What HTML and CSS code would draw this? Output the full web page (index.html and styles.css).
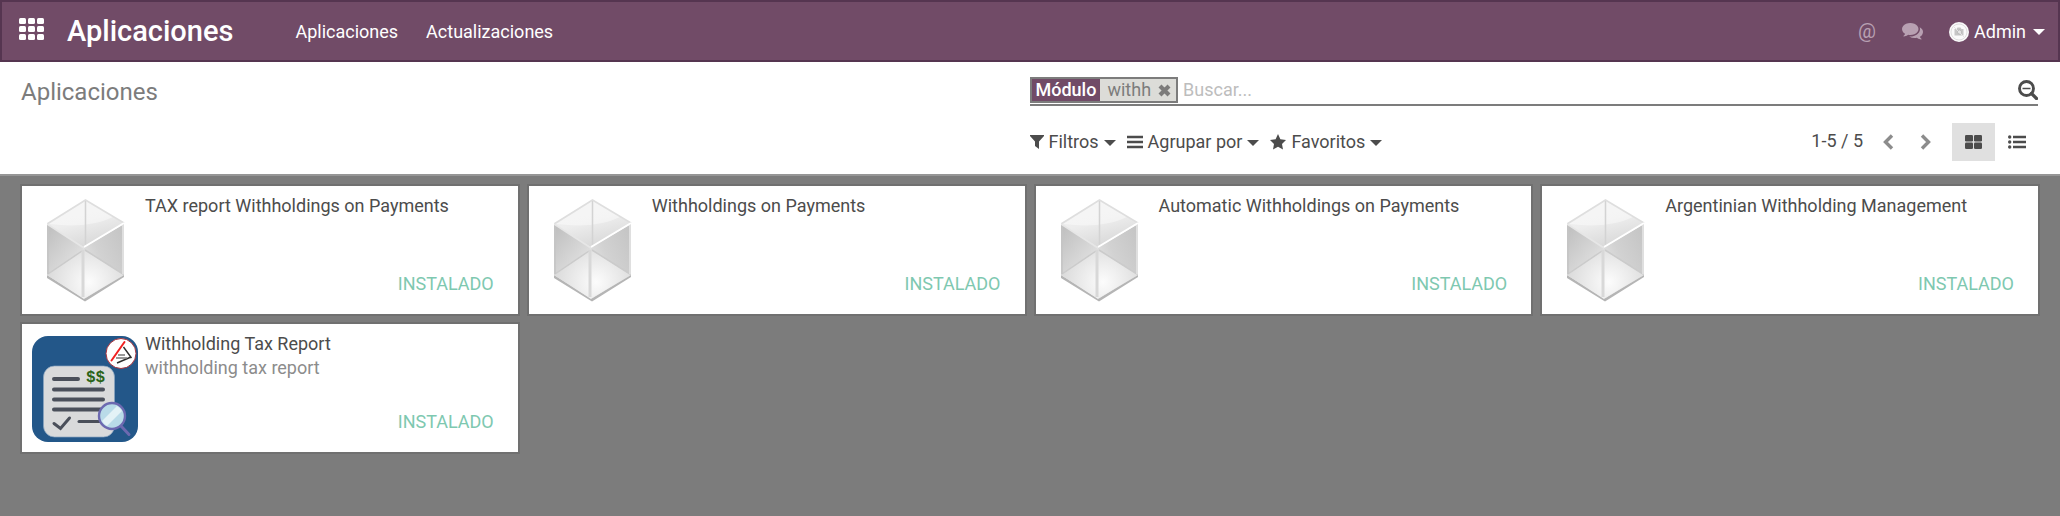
FILE: index.html
```html
<!DOCTYPE html>
<html lang="es">
<head>
<meta charset="utf-8">
<title>Aplicaciones</title>
<link rel="stylesheet" href="styles.css">
</head>
<body>
<svg class="defs" aria-hidden="true">
  <defs>
    <linearGradient id="g-top" x1="0" y1="0" x2="0.4" y2="1"><stop offset="0" stop-color="#f1f1f1"/><stop offset="0.55" stop-color="#ededed"/><stop offset="1" stop-color="#dadada"/></linearGradient>
    <linearGradient id="g-left" x1="0" y1="0" x2="0.6" y2="1"><stop offset="0" stop-color="#bdbdbd"/><stop offset="0.6" stop-color="#d9d9d9"/><stop offset="1" stop-color="#efefef"/></linearGradient>
    <linearGradient id="g-right" x1="1" y1="0" x2="0.1" y2="0.8"><stop offset="0" stop-color="#c3c3c3"/><stop offset="0.6" stop-color="#d2d2d2"/><stop offset="1" stop-color="#e6e6e6"/></linearGradient>
    <radialGradient id="g-base" gradientUnits="userSpaceOnUse" cx="42" cy="83" r="40"><stop offset="0" stop-color="#fcfcfc"/><stop offset="1" stop-color="#dcdcdc"/></radialGradient>
    <symbol id="cube" viewBox="0 0 78 103">
      <path d="M0 76 38 99 77 75V78L38 102.500 0 79Z" fill="#b5b5b5"/>
      <path d="M0 25 37 48.500V100L0 76Z" fill="url(#g-left)"/>
      <path d="M77 25 37 48.500V100L77 76Z" fill="url(#g-right)"/>
      <path d="M0 76 37 51 77 76 37 99.500Z" fill="url(#g-base)"/>
      <path d="M0 25 38.500 1 77 24 37 48.500Z" fill="url(#g-top)"/>
      <path d="M2 25 38.500 2 66 18Q42 30 2 25Z" fill="#fff" opacity=".4"/>
      <path d="M38.500 2V46" stroke="#d3d3d3" stroke-width="1.500"/>
      <path d="M0 25 38.500 1 77 24" fill="none" stroke="#dedede" stroke-width="1.500"/>
      <path d="M1 75 35 52M38 51 76 75" fill="none" stroke="#cbcbcb" stroke-width="1.500"/>
      <path d="M36 51V98" stroke="#d8d8d8" stroke-width="3"/>
      <path d="M1 26V75" stroke="#c4c4c4" stroke-width="1.500"/>
      <path d="M76 25V75" stroke="#dfdfdf" stroke-width="2"/>
      <path d="M0 25 37 49" stroke="#e6e6e6" stroke-width="1.500"/>
      <path d="M37 48 77 24" stroke="#fff" stroke-width="2"/>
    </symbol>
  </defs>
</svg>

<header class="navbar">
  <button class="nav-btn apps" aria-label="Menú de aplicaciones">
    <svg width="25" height="22" viewBox="0 0 25 22" fill="#fff"><rect width="7" height="6" rx="1.500"/><rect x="9" width="7" height="6" rx="1.500"/><rect x="18" width="7" height="6" rx="1.500"/><rect y="8" width="7" height="6" rx="1.500"/><rect x="9" y="8" width="7" height="6" rx="1.500"/><rect x="18" y="8" width="7" height="6" rx="1.500"/><rect y="16" width="7" height="6" rx="1.500"/><rect x="9" y="16" width="7" height="6" rx="1.500"/><rect x="18" y="16" width="7" height="6" rx="1.500"/></svg>
  </button>
  <a class="brand" href="#">Aplicaciones</a>
  <nav class="menu">
    <a href="#">Aplicaciones</a>
    <a href="#">Actualizaciones</a>
  </nav>
  <div class="systray">
    <button class="nav-btn at" aria-label="Actividades">@</button>
    <button class="nav-btn chat" aria-label="Conversaciones">
      <svg width="21" height="17" viewBox="0 0 1792 1450" fill="#b8a0b2"><path d="M1408 512q0 139-94 257t-256.500 186.500T704 1024q-86 0-176-16-124 88-278 128-36 9-86 16h-3q-11 0-20.500-8t-11.500-21q-1-3-1-6.500t.5-6.500 2-6l2.500-5 3.500-5.500 4-5 4.500-5 4-4.500q5-6 23-25t26-29.500 22.500-29 25-38.500 20.500-44q-124-72-195-177T0 512q0-139 94-257T350.500 68.500 704 0t353.500 68.500T1314 255t94 257zm384 256q0 120-71 224.500T1526 1169q10 24 20.500 44t25 38.500 22.500 29 26 29.500 23 25q1 1 4 4.500t4.500 5 4 5 3.500 5.500l2.500 5 2 6 .5 6.500-1 6.500q-3 14-13 22t-22 7q-50-7-86-16-154-40-278-128-90 16-176 16-271 0-472-132 58 4 88 4 161 0 309-45t264-129q125-92 192-212t67-254q0-77-23-152 129 71 204 178t75 230z"/></svg>
    </button>
    <button class="nav-btn user">
      <svg width="20" height="20" viewBox="0 0 20 20"><circle cx="10" cy="10" r="10" fill="#fafafa"/><circle cx="10" cy="10" r="8" fill="none" stroke="#dedede"/><path d="M5.500 7h2l1-1.500h3L12.500 7h2v6.500h-9Z" fill="#c6c6c6"/><circle cx="10.500" cy="10" r="2" fill="#e6e6e6" stroke="#aaa" stroke-width=".6"/><path d="M4.500 4.500 15.500 15.500" stroke="#e4e4e4"/></svg>
      <span>Admin</span>
      <span class="caret"></span>
    </button>
  </div>
</header>

<section class="panel">
  <h1 class="crumb">Aplicaciones</h1>
  <div class="tools">
    <div class="search">
      <div class="facet">
        <span class="facet-name">Módulo</span>
        <span class="facet-value">withh</span>
        <button class="facet-x" aria-label="Quitar"><svg width="13" height="13" viewBox="0 0 13 13"><path d="M2 2 11 11M11 2 2 11" stroke="#7c7b7a" stroke-width="4.200"/></svg></button>
      </div>
      <input class="search-input" type="text" placeholder="Buscar..." aria-label="Buscar">
      <button class="search-btn" aria-label="Buscar">
        <svg width="20" height="20" viewBox="0 0 20 20" fill="none" stroke="#4c4c4c"><circle cx="8.500" cy="8.500" r="7" stroke-width="2.900"/><path d="M4.500 8.500h8" stroke-width="1.500"/><path d="M13.500 13.500 18.500 18.500" stroke-width="3.200" stroke-linecap="round"/></svg>
      </button>
    </div>
    <div class="row">
      <div class="filters">
        <button class="filter"><svg width="14" height="14" viewBox="0 0 14 14"><path d="M0 0H14V1L9 6.500V14L5 11V6.500L0 1Z"/></svg><span>Filtros</span><span class="caret"></span></button>
        <button class="filter"><svg width="16" height="14" viewBox="0 0 16 14"><path d="M0 .8H16V3.200H0ZM0 5.800H16V8.200H0ZM0 10.800H16V13.200H0Z"/></svg><span>Agrupar por</span><span class="caret"></span></button>
        <button class="filter"><svg width="16" height="16" viewBox="0 0 16 16"><path d="M8 0 10.400 5.200 16 6 12 9.900 13 15.500 8 12.800 3 15.500 4 9.900 0 6 5.600 5.200Z"/></svg><span>Favoritos</span><span class="caret"></span></button>
      </div>
      <div class="pager">
        <span class="count">1-5 / 5</span>
        <button class="arrow" aria-label="Anterior"><svg width="11" height="16" viewBox="0 0 11 16"><path d="M9 1.500 2.500 8 9 14.500"/></svg></button>
        <button class="arrow" aria-label="Siguiente"><svg width="11" height="16" viewBox="0 0 11 16"><path d="M2 1.500 8.500 8 2 14.500"/></svg></button>
        <button class="view active" aria-label="Kanban"><svg width="17" height="14" viewBox="0 0 17 14"><rect width="8" height="6.500" rx="1.300"/><rect x="9" width="8" height="6.500" rx="1.300"/><rect y="7.500" width="8" height="6.500" rx="1.300"/><rect x="9" y="7.500" width="8" height="6.500" rx="1.300"/></svg></button>
        <button class="view" aria-label="Lista"><svg width="18" height="14" viewBox="0 0 18 14"><circle cx="1.700" cy="2" r="1.700"/><circle cx="1.700" cy="7" r="1.700"/><circle cx="1.700" cy="12" r="1.700"/><path d="M5 .8H18V3.200H5ZM5 5.800H18V8.200H5ZM5 10.800H18V13.200H5Z"/></svg></button>
      </div>
    </div>
  </div>
</section>

<main class="kanban">
  <article class="card">
    <div class="icon"><svg class="cube"><use href="#cube"/></svg></div>
    <div class="body"><h2>TAX report Withholdings on Payments</h2><p class="state">INSTALADO</p></div>
  </article>
  <article class="card">
    <div class="icon"><svg class="cube"><use href="#cube"/></svg></div>
    <div class="body"><h2>Withholdings on Payments</h2><p class="state">INSTALADO</p></div>
  </article>
  <article class="card">
    <div class="icon"><svg class="cube"><use href="#cube"/></svg></div>
    <div class="body"><h2>Automatic Withholdings on Payments</h2><p class="state">INSTALADO</p></div>
  </article>
  <article class="card">
    <div class="icon"><svg class="cube"><use href="#cube"/></svg></div>
    <div class="body"><h2>Argentinian Withholding Management</h2><p class="state">INSTALADO</p></div>
  </article>
  <article class="card">
    <div class="icon">
      <svg width="106" height="106" viewBox="0 0 106 106">
        <rect width="106" height="106" rx="16" fill="#235789"/>
        <rect x="11.500" y="30" width="71" height="71" rx="11" fill="#d9dadb" stroke="#8aa5c0" stroke-width=".7"/>
        <g stroke="#4a4f5a" stroke-width="4" stroke-linecap="round" fill="none">
          <path d="M22 43H46M22 53.500H71M22 63.500H71M22 73.500H70"/>
          <path d="M47 85.500H68" stroke-width="3"/>
          <path d="M22 87.500 28.500 92.500 37.500 82" stroke-width="3"/>
        </g>
        <text x="54" y="46" class="dollar">$$</text>
        <path d="M89 90 97 98.500" stroke="#6c69b0" stroke-width="3" stroke-linecap="round"/>
        <circle cx="80" cy="80" r="13" fill="#b9dbe8" stroke="#6c69b0" stroke-width="2.400"/>
        <path d="M70 85 85 70A12 12 0 0 1 90 75L75 90A12 12 0 0 1 70 85Z" fill="#e3f2f6"/>
        <circle cx="89" cy="17.500" r="15" fill="#fff" stroke="#a8323c"/>
        <path d="M79.500 24.500 92.500 6" stroke="#f02020" stroke-width="2" stroke-linecap="round"/>
        <path d="M91.500 11 99.500 22M85 27 99 21" stroke="#2d2d2d" stroke-width="1.400" fill="none"/>
        <path d="M86 19H93M84 22H95" stroke="#777" stroke-width="1.400"/>
      </svg>
    </div>
    <div class="body"><h2>Withholding Tax Report</h2><p class="summary">withholding tax report</p><p class="state">INSTALADO</p></div>
  </article>
</main>
</body>
</html>
```
FILE: styles.css
```css
* { box-sizing: border-box; }
html { min-height: 100%; background: #7c7c7c; }
body { margin: 0; font-family: Roboto, "Liberation Sans", sans-serif; font-size: 18px; line-height: 24px; color: #4c4c4c; }
.defs { position: absolute; width: 0; height: 0; }
svg { display: block; flex: none; }
button { font: inherit; color: inherit; background: none; border: 0; padding: 0; display: flex; align-items: center; }
a { color: inherit; text-decoration: none; }
h1, h2, p { margin: 0; font-size: inherit; font-weight: 400; }

.navbar { display: flex; align-items: center; height: 62px; padding: 0 13px 0 17px; background: #714b67; border: 2px solid #553550; color: #fff; }
.apps { padding-bottom: 4px; }
.brand { margin-left: 23px; font-size: 29px; line-height: 36px; font-weight: 500; }
.menu { display: flex; gap: 28px; margin-left: 62px; }
.systray { display: flex; align-items: center; margin-left: auto; }
.at { color: #b8a0b2; font-size: 20px; }
.chat { margin-left: 26px; }
.user { gap: 5px; margin-left: 26px; }
.user, .menu { padding-top: 1px; }
.caret { width: 0; height: 0; border: 6px solid transparent; border-top-color: currentColor; border-bottom: 0; }
.user .caret { margin-left: 2px; }

.panel { display: flex; padding: 14px 22px 13px 21px; background: #fff; border-bottom: 2px solid #969696; }
.crumb { flex: 1; font-size: 24px; line-height: 32px; color: #7c7c7c; }
.tools { flex: 1; }
.search { display: flex; align-items: center; height: 30px; border-bottom: 2px solid #7c7c7c; }
.facet { display: flex; height: 26px; background: #dcdcd8; border: 2px solid #7c7c7c; color: #7c7c7c; line-height: 22px; }
.facet-name { padding: 0 4px; background: #714b67; color: #fff; font-weight: 500; }
.facet-value { padding: 0 7px; }
.facet-x { padding-right: 5px; }
.search-input { flex: 1; min-width: 0; padding: 0 5px; border: 0; outline: 0; background: none; font: inherit; color: #4c4c4c; }
.search-input::placeholder { color: #bdbdbd; opacity: 1; }
.row { display: flex; justify-content: space-between; align-items: center; margin-top: 17px; }
.filters { display: flex; gap: 11px; }
.filter { gap: 5px; }
.filter .caret { margin-top: 2px; }
.filter svg, .view svg { fill: #4c4c4c; }
.pager { display: flex; align-items: center; }
.count { padding-bottom: 2px; }
.arrow { margin-left: 20px; width: 17px; }
.arrow svg { fill: none; stroke: #8c8c8c; stroke-width: 3.4px; }
.view { justify-content: center; width: 43px; height: 38px; }
.view.active { margin-left: 15px; background: #e0e0e0; }

.kanban { display: grid; grid-template-columns: repeat(4, 1fr); gap: 10px 11px; padding: 10px 22px; }
.card { display: flex; gap: 7px; height: 128px; padding: 8px 24px 8px 10px; background: #fff; box-shadow: 0 0 0 2px #707070; }
.icon { width: 106px; padding-top: 4px; }
.cube { width: 78px; height: 103px; margin-left: 15px; margin-top: 1px; }
.body { flex: 1; display: flex; flex-direction: column; }
.summary { color: #8c8c8c; }
.state { margin-top: auto; padding-bottom: 10px; text-align: right; color: #7ec8b0; }
.dollar { font: 700 16px "Liberation Mono", monospace; fill: #2a6418; }
```
